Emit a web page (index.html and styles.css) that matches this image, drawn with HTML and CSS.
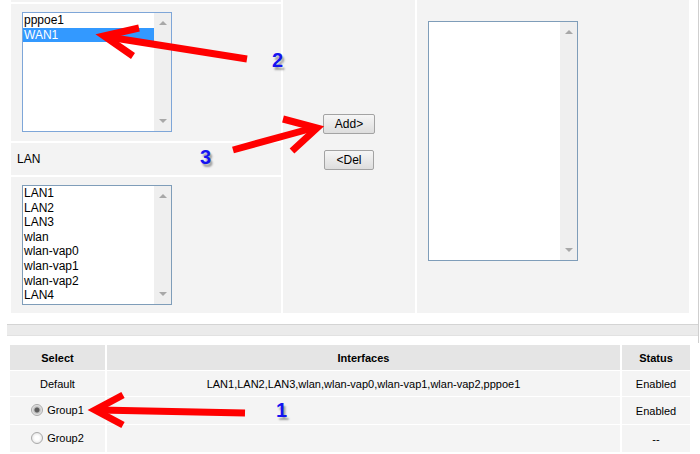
FILE: index.html
```html
<!DOCTYPE html>
<html lang="en">
<head>
  <meta charset="UTF-8">
  <title>Port Mapping</title>
  <link rel="stylesheet" href="styles.css">
</head>
<body>
<div class="frame">
  <div class="setup">
    <div class="side">
      <div class="cell stub"></div>
      <div class="cell pick">
        <div class="listbox focus">
          <ul class="items">
            <li>pppoe1</li>
            <li class="sel">WAN1</li>
          </ul>
          <div class="scroll"><span class="up"></span><span class="down"></span></div>
        </div>
      </div>
      <div class="cell caption">LAN</div>
      <div class="cell pick lower">
        <div class="listbox">
          <ul class="items">
            <li>LAN1</li>
            <li>LAN2</li>
            <li>LAN3</li>
            <li>wlan</li>
            <li>wlan-vap0</li>
            <li>wlan-vap1</li>
            <li>wlan-vap2</li>
            <li>LAN4</li>
          </ul>
          <div class="scroll"><span class="up"></span><span class="down"></span></div>
        </div>
      </div>
    </div>
    <div class="cell mid">
      <button type="button">Add&gt;</button>
      <button type="button">&lt;Del</button>
    </div>
    <div class="cell target">
      <div class="listbox tall">
        <ul class="items"></ul>
        <div class="scroll"><span class="up"></span><span class="down"></span></div>
      </div>
    </div>
  </div>
  <div class="band"></div>
</div>

<table class="groups">
  <tr class="head">
    <th class="c-select">Select</th>
    <th>Interfaces</th>
    <th class="c-status">Status</th>
  </tr>
  <tr>
    <td>Default</td>
    <td>LAN1,LAN2,LAN3,wlan,wlan-vap0,wlan-vap1,wlan-vap2,pppoe1</td>
    <td>Enabled</td>
  </tr>
  <tr class="tall-row">
    <td><label><input type="radio" name="grp" checked>Group1</label></td>
    <td></td>
    <td>Enabled</td>
  </tr>
  <tr class="tall-row">
    <td><label><input type="radio" name="grp">Group2</label></td>
    <td></td>
    <td>--</td>
  </tr>
</table>

<!-- annotations drawn over the screenshot -->
<svg class="marks" width="700" height="454" viewBox="0 0 700 454">
  <g fill="none" stroke="#ff0000" stroke-width="7" stroke-linejoin="miter" stroke-miterlimit="10">
    <line x1="247" y1="59" x2="108" y2="37"/>
    <polyline points="139,28 104,36 133,56"/>
    <line x1="233" y1="150" x2="313" y2="128"/>
    <polyline points="283,119 317,128 292,151"/>
    <line x1="245" y1="413" x2="99" y2="410"/>
    <polyline points="123,395 95,410 123,425"/>
  </g>
</svg>
<span class="num n1">1</span>
<span class="num n2">2</span>
<span class="num n3">3</span>
</body>
</html>
```

FILE: styles.css
```css
body {
  margin: 0;
  width: 700px;
  height: 454px;
  overflow: hidden;
  position: relative;
  background-color: #fff;
  color: #000;
  font-family: "Liberation Sans", Arial, sans-serif;
  font-size: 12px;
}
.frame {
  margin-left: 7px;
  width: 691px;
  padding-bottom: 7px;
  border-right: 1px solid #cfcfcf;
}
.setup {
  margin-left: 4px;
  height: 313px;
  display: grid;
  grid-template-columns: 270px 132px 272px;
  column-gap: 2px;
}
.side {
  display: flex;
  flex-direction: column;
  gap: 2px;
}
.cell {
  background-color: #f3f3f3;
}
.stub {
  height: 2px;
}
.pick {
  height: 137px;
  box-sizing: border-box;
  padding: 8px 0 0 11px;
}
.pick.lower {
  height: 136px;
}
.caption {
  height: 32px;
  line-height: 32px;
  padding-left: 6px;
}
.mid {
  display: flex;
  flex-direction: column;
  align-items: center;
  gap: 16px;
  padding-top: 114px;
}
.mid button {
  height: 20px;
  padding: 0 11px;
  border: 1px solid #a3a3a3;
  border-radius: 2px;
  background: linear-gradient(#f6f6f6, #dddddd);
  color: #000;
  font-family: "Liberation Sans", Arial, sans-serif;
  font-size: 12px;
  cursor: pointer;
}
.target {
  padding: 21px 0 0 11px;
}
.listbox {
  width: 150px;
  height: 120px;
  box-sizing: border-box;
  border: 1px solid #7f9db9;
  background-color: #fff;
  display: flex;
}
.listbox.focus {
  border-color: #7ea6d8;
}
.listbox.tall {
  height: 240px;
}
.items {
  flex: 1;
  list-style: none;
  margin: 0;
  padding: 0;
}
.items li {
  line-height: 14.6px;
  padding-left: 1px;
  white-space: nowrap;
}
.items li.sel {
  background-color: #3399ff;
  color: #fff;
}
.scroll {
  width: 17px;
  background-color: #efefef;
  display: flex;
  flex-direction: column;
  justify-content: space-between;
  align-items: center;
  padding: 8px 0;
}
.scroll .up {
  border-left: 4px solid transparent;
  border-right: 4px solid transparent;
  border-bottom: 4px solid #a8a8a8;
}
.scroll .down {
  border-left: 4px solid transparent;
  border-right: 4px solid transparent;
  border-top: 4px solid #a8a8a8;
}
.band {
  margin-top: 11px;
  height: 10px;
  background-color: #ebebeb;
  border-top: 1px solid #d4d4d4;
  border-bottom: 1px solid #e2e2e2;
}
.groups {
  margin: 1px 0 0 8px;
  width: 684px;
  border-collapse: separate;
  border-spacing: 2px 1px;
  font-size: 11px;
}
.groups th,
.groups td {
  padding: 0;
  text-align: center;
  vertical-align: middle;
  background-color: #f4f4f4;
}
.groups tr {
  height: 25px;
}
.groups tr.tall-row {
  height: 27px;
}
.groups .head th {
  background-color: #e5e5e5;
  font-weight: bold;
}
.c-select {
  width: 95px;
}
.c-status {
  width: 68px;
}
.groups label {
  display: inline-flex;
  align-items: center;
}
.groups input[type="radio"] {
  appearance: none;
  -webkit-appearance: none;
  width: 12px;
  height: 12px;
  margin: 0 4px 0 0;
  border: 1px solid #a9a9a9;
  border-radius: 50%;
  background: radial-gradient(circle, #ffffff 30%, #dadada 100%);
}
.groups input[type="radio"]:checked {
  background: radial-gradient(circle, #5c5c5c 0, #5c5c5c 2px, #bdbdbd 3px, #ececec 5px);
}
.marks {
  position: absolute;
  left: 0;
  top: 0;
  pointer-events: none;
}
.num {
  position: absolute;
  font-size: 20px;
  line-height: 1;
  font-weight: bold;
  color: #1414f0;
  text-shadow: 2px 3px 2px rgba(0, 0, 0, 0.35);
}
.n1 {
  left: 276px;
  top: 400px;
}
.n2 {
  left: 272px;
  top: 50px;
}
.n3 {
  left: 200px;
  top: 147px;
}
```
